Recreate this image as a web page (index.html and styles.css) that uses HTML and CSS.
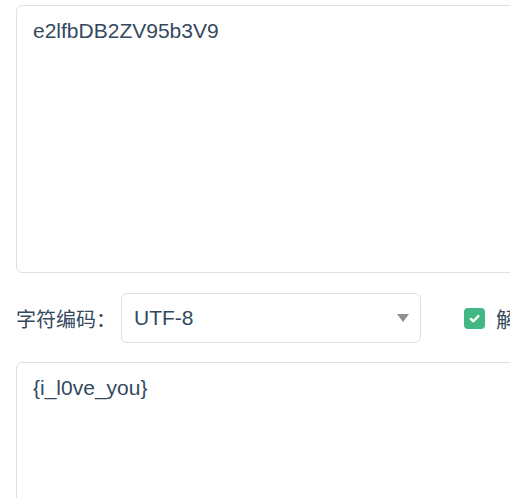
FILE: index.html
```html
<!DOCTYPE html>
<html>
<head>
<meta charset="utf-8">
<link rel="stylesheet" href="styles.css">
</head>
<body>
<div class="page">
  <div class="area area-top">e2lfbDB2ZV95b3V9</div>
  <div class="row">
    <span class="label">字符编码：</span>
    <div class="select">
      <span class="select-value">UTF-8</span>
      <span class="caret"></span>
    </div>
    <label class="check">
      <span class="box">
        <svg width="13" height="13" viewBox="0 0 13 13"><path d="M2.8 6.9 L5.4 9.3 L10.3 4.1" fill="none" stroke="#fff" stroke-width="2.4" stroke-linecap="round" stroke-linejoin="round"/></svg>
      </span>
      <span class="check-text">解码</span>
    </label>
  </div>
  <div class="area area-bottom">{i_l0ve_you}</div>
</div>
</body>
</html>
```

FILE: styles.css
```css
html, body {
  margin: 0;
  padding: 0;
  overflow: hidden;
  background: #fff;
}
.page {
  width: 700px;
  padding: 5px 0 0 16px;
  font-family: "Liberation Sans", Arial, "Noto Sans CJK SC", sans-serif;
  font-size: 21px;
  color: #34495e;
}
.area {
  box-sizing: border-box;
  border: 1px solid #dcdfe6;
  border-radius: 6px;
  padding: 9px 16px;
  line-height: 31px;
}
.area-top {
  height: 268px;
}
.area-bottom {
  height: 200px;
}
.row {
  display: flex;
  align-items: center;
  margin: 20px 0 19px;
}
.label {
  font-family: "Noto Sans CJK SC", sans-serif;
  font-size: 20px;
  width: 105px;
  color: #34495e;
}
.select {
  box-sizing: border-box;
  width: 300px;
  height: 50px;
  border: 1px solid #dcdfe6;
  border-radius: 6px;
  display: flex;
  align-items: center;
  justify-content: space-between;
  padding: 0 11px 0 12px;
}
.select-value {
  color: #34495e;
}
.caret {
  width: 0;
  height: 0;
  border-left: 6px solid transparent;
  border-right: 6px solid transparent;
  border-top: 8px solid #909090;
}
.check {
  display: flex;
  align-items: center;
  margin-left: 43px;
}
.box {
  width: 21px;
  height: 21px;
  border-radius: 4px;
  background: #41b883;
  display: flex;
  align-items: center;
  justify-content: center;
}
.box svg {
  display: block;
}
.check-text {
  font-family: "Noto Sans CJK SC", sans-serif;
  margin-left: 11px;
  white-space: nowrap;
}
```
